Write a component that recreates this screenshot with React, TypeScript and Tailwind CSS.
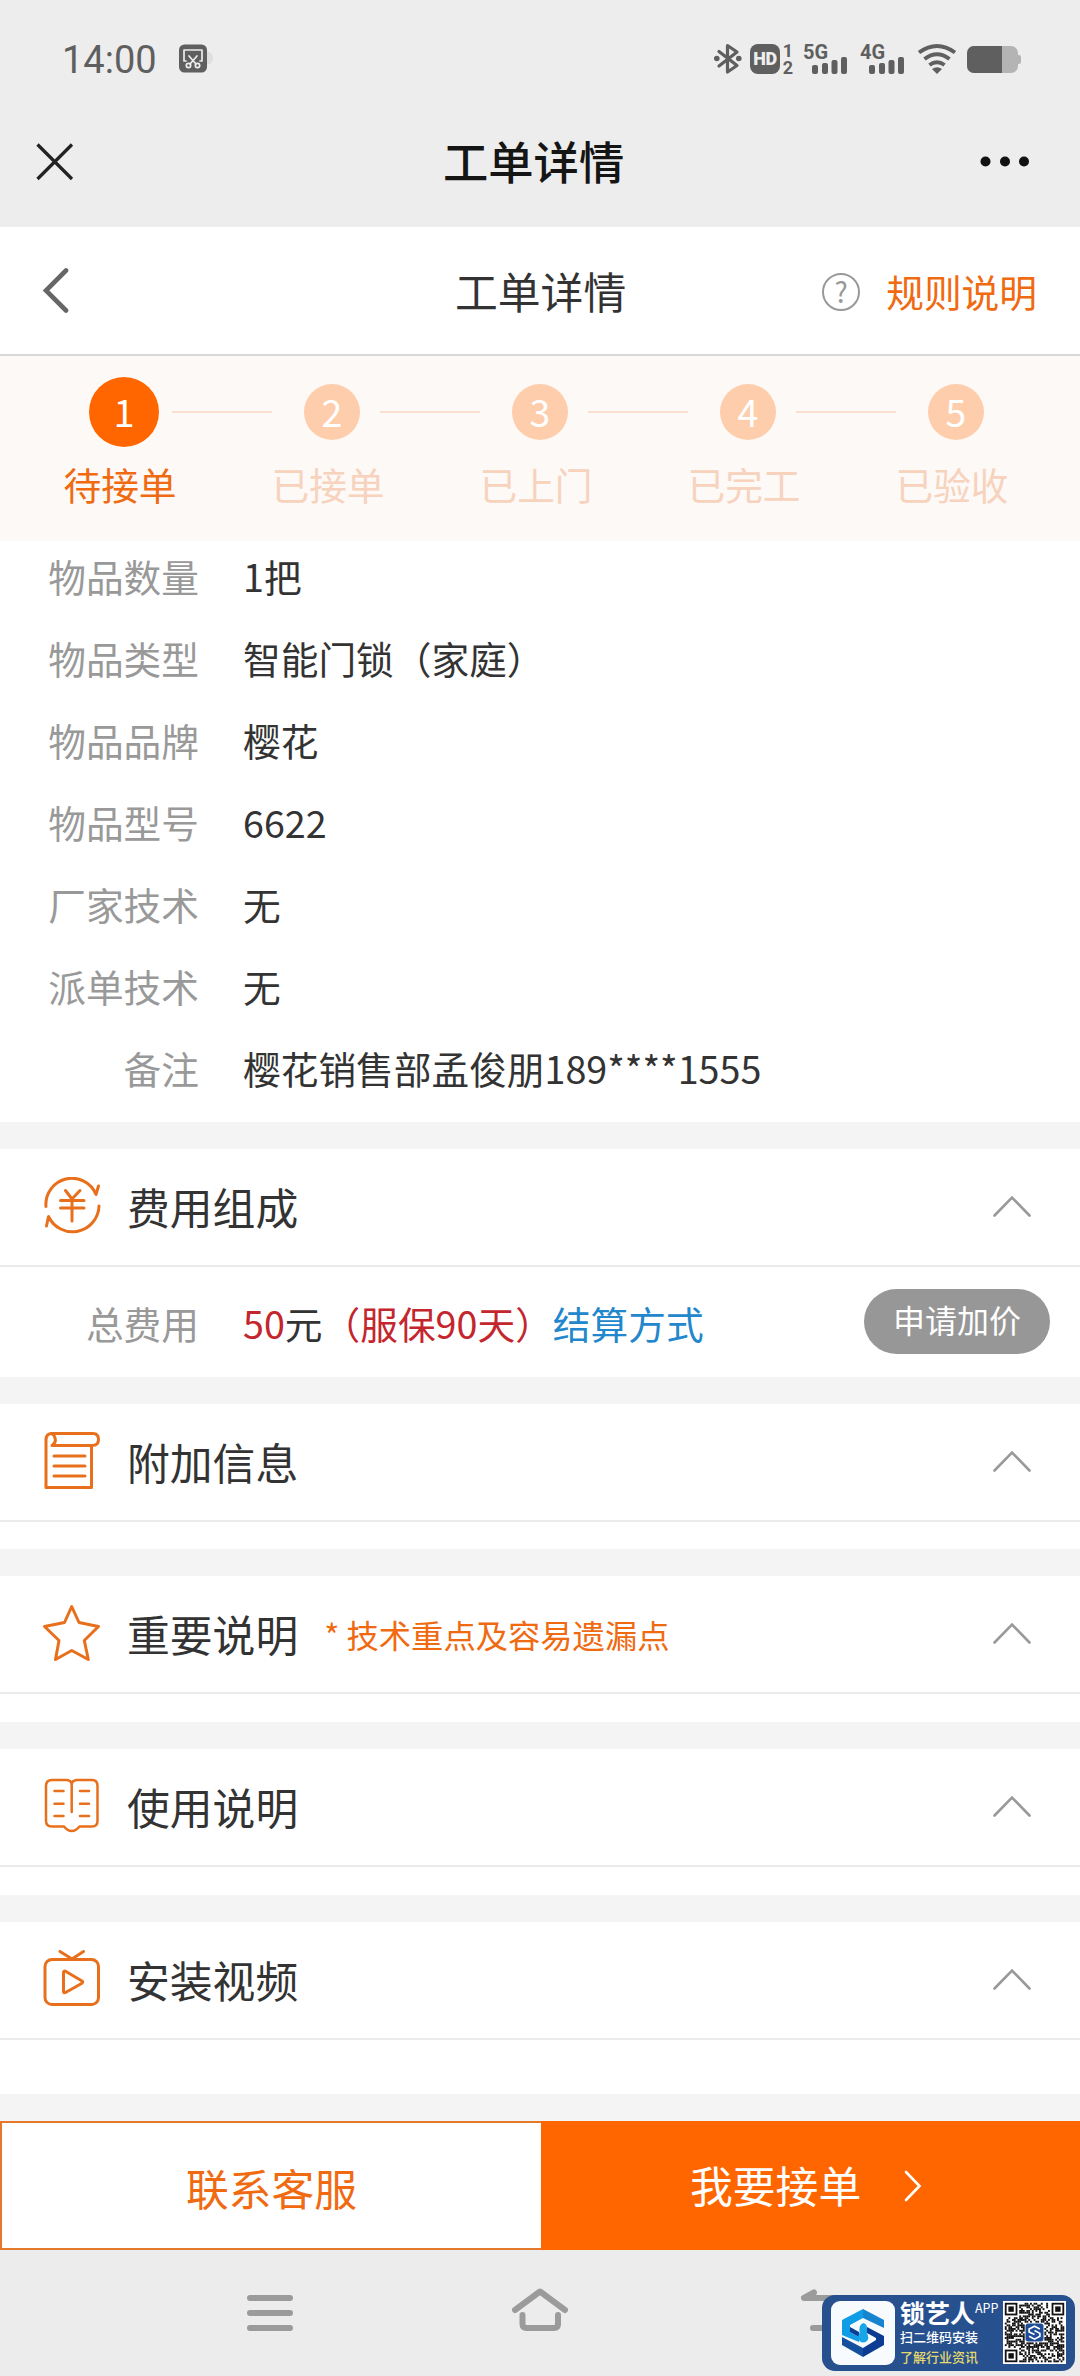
import type { ReactNode } from 'react'

const steps = ['待接单', '已接单', '已上门', '已完工', '已验收']

const details = [
  { label: '物品数量', value: '1把' },
  { label: '物品类型', value: '智能门锁（家庭）' },
  { label: '物品品牌', value: '樱花' },
  { label: '物品型号', value: '6622' },
  { label: '厂家技术', value: '无' },
  { label: '派单技术', value: '无' },
  { label: '备注', value: '樱花销售部孟俊朋189****1555' },
]

function StatusBar() {
  return (
    <div className="flex h-[100px] items-center pt-[17px] pl-[62px] text-[#5f5f5f]">
      <span className="w-[117px] pt-[3px] font-[Roboto] text-[38px] leading-none">14:00</span>
      <svg width="38" height="30" viewBox="0 0 38 30">
        <circle cx="27" cy="14" r="7" fill="#dedede" />
        <rect x="0" y="0.5" width="28" height="28" rx="5.5" fill="#5f5f5f" />
        <g fill="none" stroke="#ededed" strokeWidth="1.7" strokeLinecap="round" strokeLinejoin="round">
          <path d="M7 17H5V6H23V17H21" />
          <path d="M10 12L17 20M18 12L11 20" />
          <circle cx="9.5" cy="21.5" r="2.2" />
          <circle cx="18.5" cy="21.5" r="2.2" />
        </g>
      </svg>
      <svg className="ml-[497px]" width="28" height="32" viewBox="0 0 28 32">
        <path
          d="M5 8.5L23 22.5L13.5 29V2.5L23 9L5 23"
          fill="none"
          stroke="#5f5f5f"
          strokeWidth="3.2"
          strokeLinecap="round"
          strokeLinejoin="round"
        />
        <circle cx="2.8" cy="15.5" r="2.8" fill="#5f5f5f" />
        <circle cx="24.8" cy="15.5" r="2.8" fill="#5f5f5f" />
      </svg>
      <span className="ml-[8px] flex h-[30px] w-[30px] items-center justify-center rounded-[8px] bg-[#5f5f5f] font-[Roboto] text-[18px] leading-none font-black tracking-[-0.5px] text-[#ededed]">
        HD
      </span>
      <span className="ml-[2px] flex w-[12px] flex-col items-center font-[Roboto] text-[18px] leading-[17px] font-bold">
        <span>1</span>
        <span>2</span>
      </span>
      <Signal label="5G" />
      <Signal label="4G" />
      <svg className="ml-[9px]" width="40" height="32" viewBox="0 0 40 32">
        <g fill="none" stroke="#5f5f5f" strokeWidth="4">
          <path d="M2 9.5Q20 -3.5 38 9.5" />
          <path d="M7.5 16Q20 6.5 32.5 16" />
          <path d="M12.5 22Q20 16.5 27.5 22" />
        </g>
        <path d="M15 26Q20 22.5 25 26L20 31Z" fill="#5f5f5f" />
      </svg>
      <span className="ml-[10px] flex items-center pt-[2px]">
        <span className="flex h-[27px] w-[51px] overflow-hidden rounded-[7px] bg-[#b4b4b4]">
          <span className="w-[35px] bg-[#5f5f5f]" />
        </span>
        <span className="h-[9px] w-[3px] rounded-r-[2px] bg-[#b4b4b4]" />
      </span>
    </div>
  )
}

function Signal({ label }: { label: string }) {
  return (
    <span className="ml-[9px] flex h-[32px] w-[48px] flex-col">
      <span className="h-[14px] font-[Roboto] text-[20px] leading-[18px] font-bold">{label}</span>
      <svg className="ml-[9px]" width="36" height="17" viewBox="0 0 36 17">
        <g fill="#5f5f5f">
          <rect x="0" y="8" width="6" height="9" rx="2" />
          <rect x="10" y="6" width="6" height="11" rx="2" />
          <rect x="19.5" y="3" width="6" height="14" rx="2" />
          <rect x="29" y="0" width="6" height="17" rx="2" />
        </g>
      </svg>
    </span>
  )
}

function Steps() {
  return (
    <div className="h-[185px] bg-[#fdf9f6] pt-[21px]">
      <div className="flex h-[70px] items-center pl-[89px]">
        {steps.map((name, i) => (
          <div key={name} className="flex items-center">
            <div className="flex w-[70px] justify-center">
              {i === 0 ? (
                <span className="flex h-[70px] w-[70px] items-center justify-center rounded-full bg-[#ff6600] pb-[2px] text-[38px] leading-none text-white">
                  1
                </span>
              ) : (
                <span className="flex h-[56px] w-[56px] items-center justify-center rounded-full bg-[#fecdab] pb-[3px] text-[37.5px] leading-none text-white">
                  {i + 1}
                </span>
              )}
            </div>
            {i < steps.length - 1 && <div className="mr-[25px] ml-[13px] h-[2px] w-[100px] bg-[#fae0d0]" />}
          </div>
        ))}
      </div>
      <div className="mt-[17px] flex pl-[16px] text-[37.7px] leading-[40px] text-[#f7d3be]">
        {steps.map((name, i) => (
          <span key={name} className={i === 0 ? 'w-[208px] text-center text-[#ef6a10]' : 'w-[208px] text-center'}>
            {name}
          </span>
        ))}
      </div>
    </div>
  )
}

function Icon({ children }: { children: ReactNode }) {
  return (
    <svg
      width="60"
      height="60"
      viewBox="0 0 60 60"
      fill="none"
      stroke="#e8701c"
      strokeWidth="3"
      strokeLinecap="round"
      strokeLinejoin="round"
    >
      {children}
    </svg>
  )
}

type SectionProps = {
  title: string
  note?: string
  icon: ReactNode
  children?: ReactNode
}

function Section({ title, note, icon, children }: SectionProps) {
  return (
    <section className="border-t-[27px] border-[#f4f4f4] bg-white">
      <div className="flex h-[118px] items-center border-b-2 border-[#ebebeb] pr-[49px] pl-[42px]">
        {icon}
        <h2 className="ml-[25px] pb-[1px] text-[42.8px] leading-none text-[#333]">{title}</h2>
        {note && <span className="ml-[26px] text-[32.3px] leading-none text-[#ef6a10]">{note}</span>}
        <svg className="mb-[2px] ml-auto" width="38" height="22" viewBox="0 0 38 22">
          <path d="M1.5 20.5L19 2.5L36.5 20.5" fill="none" stroke="#999" strokeWidth="2.6" strokeLinecap="round" />
        </svg>
      </div>
      {children}
    </section>
  )
}

const yenIcon = (
  <Icon>
    <path d="M4 29.5A26 26 0 0 1 54 17.5L56.5 9" />
    <path d="M57 29A26.5 26.5 0 0 1 6.5 39.5L4.5 49" />
    <path d="M23.5 13.5L30 22L38 13.5M18.5 23.5H42M18.5 31H42M30 23V44" />
  </Icon>
)

const scrollIcon = (
  <Icon>
    <path d="M49.5 14V55.5H4V8Q4 1.5 10 1.5H51Q56.5 1.5 56.5 7.5T50 13.5H10Q14.5 10.5 13 6Q12 2 9 1.5" />
    <path d="M12 24H43M12 34H43M12 44H43" />
  </Icon>
)

const starIcon = (
  <Icon>
    <path d="M29.7 2.5L37 18.5L56.5 22.5L42.3 36.5L46.3 55.5L29.7 46.5L13.5 55.5L17 36.5L2.5 22.5L22.5 18.5Z" />
  </Icon>
)

const bookIcon = (
  <Icon>
    <g strokeWidth="2.5">
      <path d="M29.7 35V8Q29.7 3 24 3H10Q4 3 4 9V44Q4 49.5 10 49.5H22Q25.5 54 29.7 54T37.5 49.5H50Q55.5 49.5 55.5 44V9Q55.5 3 50 3H35.5Q29.7 3 29.7 8" />
      <path d="M12.5 14H21.5M12.5 26.7H21.5M12.5 39H21.5M38 14H47M38 26.7H47M38 39H47" />
    </g>
  </Icon>
)

const videoIcon = (
  <Icon>
    <rect x="3" y="9.5" width="53.5" height="45" rx="7" />
    <path d="M18 1.5L30 9L41.5 1.5" />
    <path d="M21.5 22.5V41.5Q21.5 43.5 23.5 42.5L40 33.2Q41.5 32 40 31L23.5 21.2Q21.5 20.5 21.5 22.5Z" />
  </Icon>
)

const QR_SIZE = 33

// dark modules of the code, finder corners and centre logo left free
function qrModules() {
  const cells: [number, number][] = []
  let seed = 7
  for (let y = 0; y < QR_SIZE; y++) {
    for (let x = 0; x < QR_SIZE; x++) {
      seed = (seed * 16807) % 2147483647
      const far = QR_SIZE - 9
      const finder = (x < 8 && y < 8) || (x > far && y < 8) || (x < 8 && y > far)
      const logo = x > 10 && x < 22 && y > 10 && y < 22
      if (!finder && !logo && seed % 100 < 52) cells.push([x, y])
    }
  }
  return cells
}

function QrCode() {
  return (
    <svg className="bg-white" width="63" height="63" viewBox="-1 -1 35 35">
      {qrModules().map(([x, y]) => (
        <rect key={`${x}-${y}`} x={x} y={y} width="1.05" height="1.05" fill="#111" />
      ))}
      {[[0, 0], [26, 0], [0, 26]].map(([x, y]) => (
        <g key={`${x}-${y}`}>
          <rect x={x + 0.5} y={y + 0.5} width="6" height="6" fill="#fff" stroke="#111" />
          <rect x={x + 2} y={y + 2} width="3" height="3" fill="#111" />
        </g>
      ))}
      <rect x="11.5" y="11.5" width="10" height="10" rx="1.5" fill="#1f4c96" />
      <path
        d="M19.5 14.6L16.5 13L13.5 14.6V16.2L16.5 17.6M13.5 18.6L16.5 20.2L19.5 18.6V17L16.5 15.4"
        fill="none"
        stroke="#fff"
        strokeWidth="0.9"
      />
    </svg>
  )
}

function AppBadge() {
  return (
    <div className="absolute right-[5px] bottom-[5px] flex h-[76px] w-[253px] rounded-[13px] bg-[#27508f] pt-[6px] pl-[9px]">
      <svg className="rounded-[9px] bg-[#f8fbfd]" width="64" height="64" viewBox="0 0 64 64">
        <path d="M11 19L32 8V17L19 24V31L28 36V41L11 34Z" fill="#0f9de6" />
        <path d="M32 8L53 19V27L32 17Z" fill="#1684cf" />
        <path d="M36 26L53 35V44L32 56V47L45 39V37L36 32Z" fill="#0b3c92" />
        <path d="M11 36L32 47V56L11 44Z" fill="#15509f" />
        <path d="M19 26L28 31V36L19 31Z" fill="#0c3f94" />
        <path d="M32.5 22Q36 23 36 27V32Q38.5 37 36 40Q32 43 28.5 40Q26 36 28.5 32V27Q29 23 32.5 22Z" fill="#18a6e8" />
      </svg>
      <div className="flex w-[108px] flex-col pl-[5px] text-white">
        <div className="flex h-[25px] items-start">
          <span className="text-[25px] leading-[22px] font-bold">锁艺人</span>
          <span className="text-[12.5px] leading-[14px]">APP</span>
        </div>
        <span className="text-[13px] leading-[21px] font-medium">扫二维码安装</span>
        <span className="text-[13px] leading-[20px] font-medium text-[#e6d96b]">了解行业资讯</span>
      </div>
      <QrCode />
    </div>
  )
}

export default function App() {
  return (
    <div className="relative flex h-[2376px] w-[1080px] flex-col overflow-hidden bg-white font-['Noto_Sans_CJK_SC',sans-serif]">
      {/* Status bar + web view title */}
      <div className="h-[227px] bg-[#ededed]">
        <StatusBar />
        <div className="flex h-[124px] items-center pr-[50px] pl-[36px]">
          <svg width="38" height="38" viewBox="0 0 38 38">
            <path d="M1.5 1.5L36 36M36 1.5L1.5 36" stroke="#222" strokeWidth="3.2" />
          </svg>
          <h1 className="ml-[369px] pb-[2px] text-[45.3px] leading-none font-medium text-[#151515]">工单详情</h1>
          <svg className="ml-auto" width="50" height="12" viewBox="0 0 50 12" fill="#111">
            <circle cx="5.5" cy="5.5" r="5" />
            <circle cx="25" cy="5.5" r="5" />
            <circle cx="44" cy="5.5" r="5" />
          </svg>
        </div>
      </div>

      {/* Page header */}
      <div className="flex h-[129px] items-center border-b-2 border-[#d8d8d8] pr-[43px] pl-[42px]">
        <svg width="28" height="46" viewBox="0 0 28 46">
          <path d="M24 2.5L4 22.5L24 42.5" fill="none" stroke="#666" strokeWidth="4.6" strokeLinecap="round" />
        </svg>
        <h2 className="ml-[385px] pb-[1px] text-[42.8px] leading-none text-[#333]">工单详情</h2>
        <span className="mt-[2px] ml-auto flex h-[38px] w-[38px] items-center justify-center rounded-full border-[2.5px] border-[#999] pb-[2px] text-[28px] leading-none text-[#999]">
          ?
        </span>
        <span className="ml-[26px] text-[37.7px] leading-none text-[#ef6a10]">规则说明</span>
      </div>

      <Steps />

      {/* Order details */}
      <div className="h-[581px]">
        {details.map((row) => (
          <div key={row.label} className="flex h-[82px] items-center pb-[12px] text-[37.7px] leading-none">
            <span className="w-[199px] text-right text-[#999]">{row.label}</span>
            <span className="ml-[44px] text-[#333]">{row.value}</span>
          </div>
        ))}
      </div>

      <Section title="费用组成" icon={yenIcon}>
        <div className="flex h-[110px] items-center text-[37.7px] leading-none">
          <span className="w-[199px] pt-[2px] text-right text-[#999]">总费用</span>
          <span className="ml-[44px] pt-[2px] text-[#333]">
            <span className="text-[#c4262e]">50</span>元<span className="text-[#c4262e]">（服保90天）</span>
          </span>
          <span className="pt-[2px] text-[#2287cc]">结算方式</span>
          <button className="mr-[30px] mb-[2px] ml-auto flex h-[65px] w-[186px] items-center justify-center rounded-full bg-[#979797] pb-[4px] text-[32px] leading-none text-white">
            申请加价
          </button>
        </div>
      </Section>
      <Section title="附加信息" icon={scrollIcon}>
        <div className="h-[27px]" />
      </Section>
      <Section title="重要说明" note="* 技术重点及容易遗漏点" icon={starIcon}>
        <div className="h-[28px]" />
      </Section>
      <Section title="使用说明" icon={bookIcon}>
        <div className="h-[28px]" />
      </Section>
      <Section title="安装视频" icon={videoIcon}>
        <div className="h-[54px]" />
      </Section>

      {/* Bottom actions */}
      <div className="flex h-[156px] border-t-[27px] border-[#f4f4f4] text-[42.8px] leading-none">
        <button className="flex w-[541px] items-center justify-center border-2 border-r-0 border-[#e5792b] pt-[4px] text-[#ef6a10]">
          联系客服
        </button>
        <button className="flex flex-1 items-center bg-[#ff6600] pb-[1px] pl-[149px] text-white">
          <span className="pb-[1px]">我要接单</span>
          <svg className="mt-[2px] ml-[43px]" width="18" height="32" viewBox="0 0 18 32">
            <path d="M2 2L15.5 16L2 30" fill="none" stroke="#fff" strokeWidth="2.6" strokeLinecap="round" />
          </svg>
        </button>
      </div>

      {/* System navigation */}
      <div className="flex flex-1 bg-[#ececec] pt-[37px] pl-[246px]">
        <svg width="48" height="48" viewBox="0 0 48 48" stroke="#9b9b9b" strokeWidth="6" strokeLinecap="round">
          <path d="M4 11H44M4 26H44M4 41H44" />
        </svg>
        <svg
          className="ml-[215px]"
          width="60"
          height="48"
          viewBox="0 0 60 48"
          fill="none"
          stroke="#9b9b9b"
          strokeWidth="6"
          strokeLinecap="round"
          strokeLinejoin="round"
        >
          <path d="M6 23L31 4.5L56 23" />
          <path d="M13.5 28V37Q13.5 41 17.5 41H45Q49 41 49 37V28" />
        </svg>
        <svg
          className="ml-[229px]"
          width="60"
          height="48"
          viewBox="0 0 60 48"
          fill="none"
          stroke="#9b9b9b"
          strokeWidth="6"
          strokeLinecap="round"
          strokeLinejoin="round"
        >
          <path d="M16 5.5L6 11H40Q54 11 54 26T40 41H15" />
        </svg>
      </div>

      <AppBadge />
    </div>
  )
}
